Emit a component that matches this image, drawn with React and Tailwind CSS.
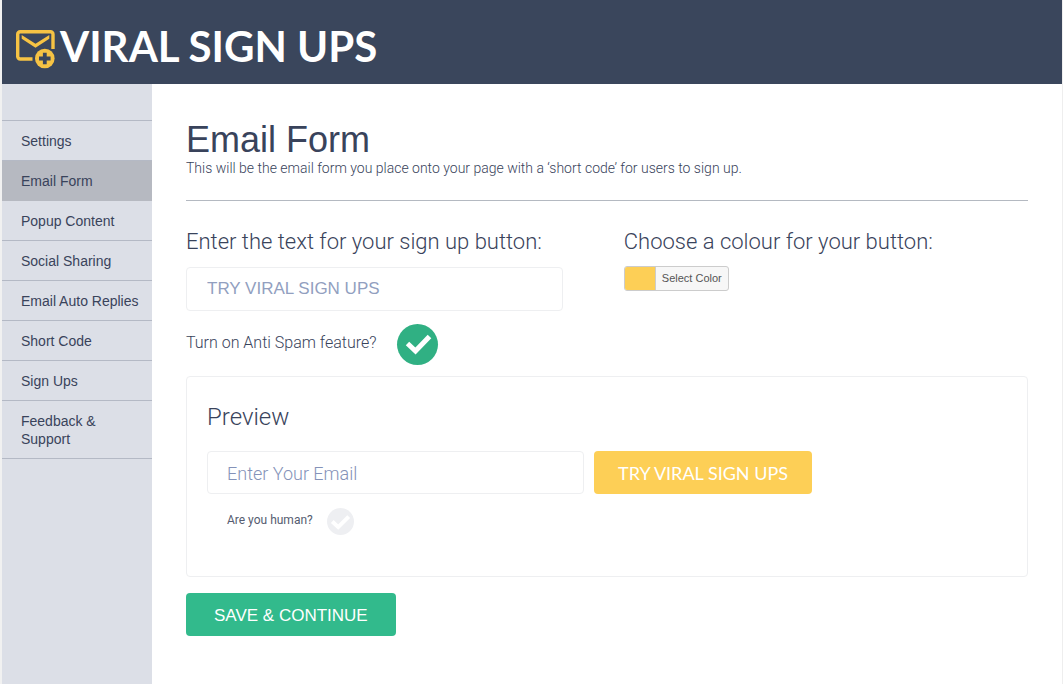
import { useState } from "react";

const NAV = [
  "Settings",
  "Email Form",
  "Popup Content",
  "Social Sharing",
  "Email Auto Replies",
  "Short Code",
  "Sign Ups",
  "Feedback & Support",
];

function Logo() {
  return (
    <a href="#" className="flex items-end gap-1 text-white">
      <svg className="h-10 w-10 shrink-0" viewBox="0 0 40 40" fill="none" aria-hidden="true">
        <path
          d="M16.500 29H4.200a2.500 2.500 0 0 1-2.500-2.500V4.200a2.500 2.500 0 0 1 2.500-2.500H34.500a2.500 2.500 0 0 1 2.500 2.500V19"
          stroke="#f6c344"
          strokeWidth="3.4"
        />
        <path d="M5.700 5v3.800L19.500 17.800 33.300 8.800V5L19.500 13.800Z" fill="#f6c344" />
        <circle cx="28.800" cy="28.500" r="9.800" fill="#f6c344" />
        <path d="M28.800 22.700v11.600M23 28.500h11.600" stroke="#3a465c" strokeWidth="3.8" />
      </svg>
      <span className="font-['Lato',sans-serif] text-[42px] leading-[48px] font-bold whitespace-nowrap">
        VIRAL SIGN UPS
      </span>
    </a>
  );
}

function RoundCheck({ id, checked, onChange, large }) {
  return (
    <span className={large ? "relative block size-[41px]" : "relative block size-[27px]"}>
      <input
        id={id}
        type="checkbox"
        checked={checked}
        onChange={onChange}
        className="block size-full cursor-pointer appearance-none rounded-full bg-[#eeeff2] checked:bg-[#30b083]"
      />
      <svg
        className="pointer-events-none absolute inset-0 size-full"
        viewBox="0 0 41 41"
        fill="none"
        aria-hidden="true"
      >
        <path
          d={large ? "M10.500 19.500 18.500 27 32.500 12.500" : "M8 20.500 17 29 33 13"}
          stroke="#fff"
          strokeWidth={large ? 5 : 6}
        />
      </svg>
    </span>
  );
}

export default function App() {
  const [active, setActive] = useState("Email Form");
  const [label, setLabel] = useState("TRY VIRAL SIGN UPS");
  const [antiSpam, setAntiSpam] = useState(true);
  const [human, setHuman] = useState(false);

  return (
    <div className="flex min-h-screen flex-col border-r border-l-2 border-r-[#eeeeee] border-l-[#f1f1f1] bg-white font-['Liberation_Sans',Arial,sans-serif] text-[#39435b]">
      <header className="flex h-[84px] items-center bg-[#3a465c] px-[14px] pt-2">
        <Logo />
      </header>

      <div className="flex flex-1">
        <nav className="w-[150px] shrink-0 bg-[#dcdfe7] pt-9">
          <ul className="border-t border-[#b4b9c5]">
            {NAV.map((item) => (
              <li key={item}>
                <a
                  href="#"
                  onClick={() => setActive(item)}
                  className={
                    item === active
                      ? "block border-b border-[#b6b9c1] bg-[#b6b9c1] pt-[11px] pr-2 pb-[10px] pl-[19px] text-sm leading-[18px]"
                      : "block border-b border-[#b4b9c5] pt-[11px] pr-2 pb-[10px] pl-[19px] text-sm leading-[18px]"
                  }
                >
                  {item}
                </a>
              </li>
            ))}
          </ul>
        </nav>

        <main className="min-w-0 flex-1 px-[34px] pt-9 pb-12">
          <div className="border-b border-[#b4b9c1] pb-6">
            <h1 className="text-4xl leading-[40px]">Email Form</h1>
            <p className="font-['Roboto',sans-serif] text-sm leading-4 font-light">
              This will be the email form you place onto your page with a ‘short code’ for users to
              sign up.
            </p>
          </div>

          <div className="grid grid-cols-[52%_1fr] pt-6">
            <div>
              <label htmlFor="label" className="block pt-px font-['Roboto',sans-serif] text-[22px] leading-8 font-light">
                Enter the text for your sign up button:
              </label>
              <input
                id="label"
                value={label}
                onChange={(e) => setLabel(e.target.value)}
                className="mt-[9px] block h-11 w-full max-w-[377px] rounded border border-[#eeeff1] px-5 text-[17px] text-[#929fbf]"
              />
            </div>
            <div>
              <h2 id="colour" className="pt-px font-['Roboto',sans-serif] text-[22px] leading-8 font-light">
                Choose a colour for your button:
              </h2>
              <button
                type="button"
                aria-describedby="colour"
                className="mt-2 flex h-[25px] items-stretch overflow-hidden rounded-[3px] border border-[#cccccc] bg-[#f7f7f7] text-[11px] leading-[23px] text-[#555555]"
              >
                <span className="w-[31px] border-r border-[#cccccc] bg-[#fdcf56]" />
                <span className="px-[6px]">Select Color</span>
              </button>
            </div>
          </div>

          <div className="flex items-center gap-5 pt-[13px]">
            <label htmlFor="spam" className="pb-1 font-['Roboto',sans-serif] text-base font-light">
              Turn on Anti Spam feature?
            </label>
            <RoundCheck id="spam" large checked={antiSpam} onChange={() => setAntiSpam(!antiSpam)} />
          </div>

          <section className="mt-[11px] rounded border border-[#eeeff1] px-5 pt-6 pb-[41px]">
            <h2 className="font-['Roboto',sans-serif] text-2xl leading-8 font-light">Preview</h2>
            <div className="flex gap-[10px] pt-[18px]">
              <input
                type="email"
                aria-label="Enter Your Email"
                placeholder="Enter Your Email"
                className="h-[43px] w-[377px] rounded border border-[#eeeff1] px-[19px] pt-[2px] font-['Roboto',sans-serif] text-lg font-light placeholder:text-[#8492b8]"
              />
              <button
                type="button"
                className="h-[43px] rounded bg-[#fdcf56] px-6 font-['Lato',sans-serif] text-lg whitespace-nowrap text-white"
              >
                {label}
              </button>
            </div>
            <div className="flex items-center gap-[14px] pt-[14px] pl-5">
              <label htmlFor="human" className="pb-1 font-['Roboto',sans-serif] text-xs text-[#555c70]">
                Are you human?
              </label>
              <RoundCheck id="human" checked={human} onChange={() => setHuman(!human)} />
            </div>
          </section>

          <button
            type="button"
            className="mt-4 h-[43px] rounded bg-[#32ba8c] px-7 pt-[2px] text-[17px] whitespace-nowrap text-white"
          >
            SAVE &amp; CONTINUE
          </button>
        </main>
      </div>
    </div>
  );
}
